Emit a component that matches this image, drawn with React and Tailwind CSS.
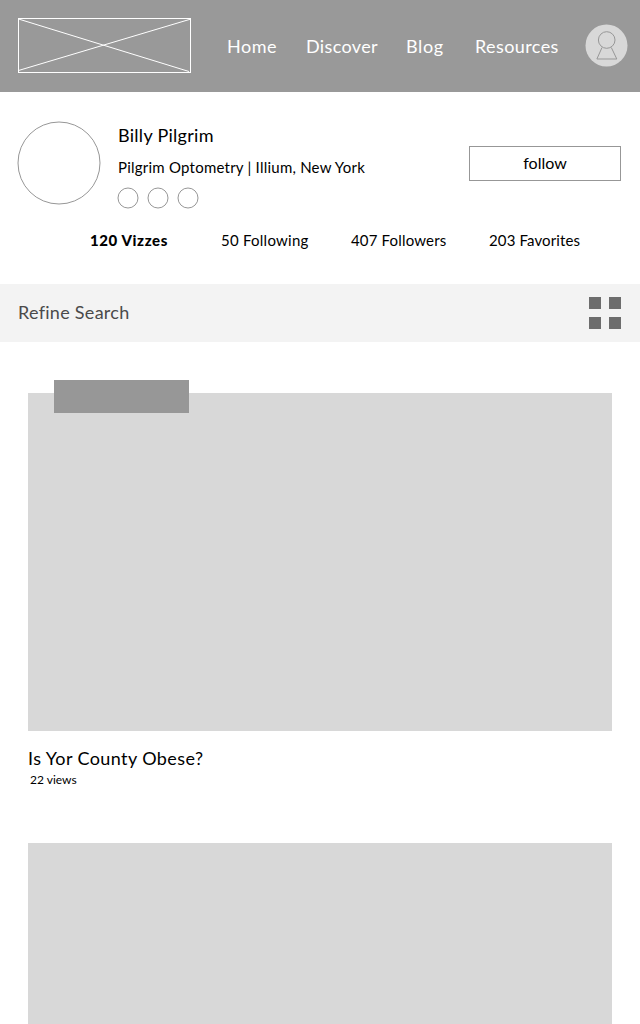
const navItems = [
  { label: "Home", style: "w-[79px] tracking-[0.5px]" },
  { label: "Discover", style: "w-[100px] tracking-[0.35px]" },
  { label: "Blog", style: "w-[69px] tracking-[0.6px]" },
  { label: "Resources", style: "w-[110px] tracking-[0.4px]" },
];

const stats = [
  { label: "120 Vizzes", style: "w-[131px] font-black tracking-[0.6px]" },
  { label: "50 Following", style: "w-[130px] tracking-[0.25px]" },
  { label: "407 Followers", style: "w-[138px] tracking-[0.17px]" },
  { label: "203 Favorites", style: "w-[110px] tracking-[0.13px]" },
];

function Header() {
  return (
    <header className="flex h-[92px] items-start bg-[#999999] pl-[18px] pt-[18px]">
      <svg className="h-[55px] w-[174px] shrink-0" viewBox="0 0 174 55" fill="none" stroke="#fff">
        <rect x="0.5" y="0.5" width="172" height="54" />
        <path d="M0.5 1 L171 53.5 M0.5 52.5 L173 1" strokeWidth="1" />
      </svg>
      <nav className="ml-[35px] mt-[14px] flex text-[18px] leading-7 text-white">
        {navItems.map((item) => (
          <a key={item.label} className={`${item.style} shrink-0 whitespace-nowrap`}>{item.label}</a>
        ))}
      </nav>
      <svg className="mt-[6px] size-[43px] shrink-0" viewBox="0 0 43 43" fill="none">
        <circle cx="21.5" cy="21.5" r="21" fill="#d8d8d8" />
        <path d="M17 23.5 L11.9 35 H31.8 L26.3 23.5" stroke="#979797" />
        <circle cx="21.7" cy="16" r="8.3" stroke="#979797" />
      </svg>
    </header>
  );
}

function SocialCircle() {
  return (
    <svg className="size-[22px]" viewBox="0 0 22 22" fill="none" stroke="#979797">
      <circle cx="11" cy="11" r="10" />
    </svg>
  );
}

function Profile() {
  return (
    <section className="h-[192px] pt-[29px] text-black">
      <div className="flex h-[107px] pl-[17px]">
        <svg className="size-[84px] shrink-0" viewBox="0 0 84 84" fill="none" stroke="#979797">
          <circle cx="42" cy="42" r="41" />
        </svg>
        <div className="ml-[17px] w-[351px]">
          <h1 className="text-[18px] leading-7 tracking-[0.28px]">Billy Pilgrim</h1>
          <p className="mt-[6px] whitespace-nowrap text-[15px] leading-6 tracking-[0.23px]">Pilgrim Optometry | Illium, New York</p>
          <div className="-ml-px mt-[8px] flex gap-[8px]">
            <SocialCircle />
            <SocialCircle />
            <SocialCircle />
          </div>
        </div>
        <button className="mt-[25px] h-[35px] w-[152px] border border-[#979797] pb-[2px] text-[16px] leading-[31px]">follow</button>
      </div>
      <div className="flex pl-[90px] text-[15px] leading-6">
        {stats.map((stat) => (
          <span key={stat.label} className={`${stat.style} shrink-0 whitespace-nowrap`}>{stat.label}</span>
        ))}
      </div>
    </section>
  );
}

function FilterBar() {
  return (
    <section className="flex h-[58px] items-center justify-between bg-[#f3f3f3] pl-[18px] pr-[19px]">
      <span className="pb-[2px] text-[18px] leading-7 tracking-[0.28px] text-[#4a4a4a]">Refine Search</span>
      <div className="grid grid-cols-2 gap-2">
        <span className="size-3 bg-[#6d6d6d]" />
        <span className="size-3 bg-[#6d6d6d]" />
        <span className="size-3 bg-[#6d6d6d]" />
        <span className="size-3 bg-[#6d6d6d]" />
      </div>
    </section>
  );
}

export default function App() {
  return (
    <div className="h-[1024px] w-[640px] overflow-hidden bg-white font-['Lato',sans-serif]">
      <Header />
      <Profile />
      <FilterBar />
      <main className="px-[28px] pt-[51px]">
        <article className="h-[450px]">
          <div className="relative h-[338px] bg-[#d8d8d8]">
            <div className="absolute -top-[13px] left-[26px] h-[33px] w-[135px] bg-[#979797]" />
          </div>
          <h2 className="mt-[13px] text-[18px] leading-7 tracking-[0.4px]">Is Yor County Obese?</h2>
          <p className="ml-[2px] text-[12px] leading-4">22 views</p>
        </article>
        <article className="h-[338px] bg-[#d8d8d8]" />
      </main>
    </div>
  );
}
